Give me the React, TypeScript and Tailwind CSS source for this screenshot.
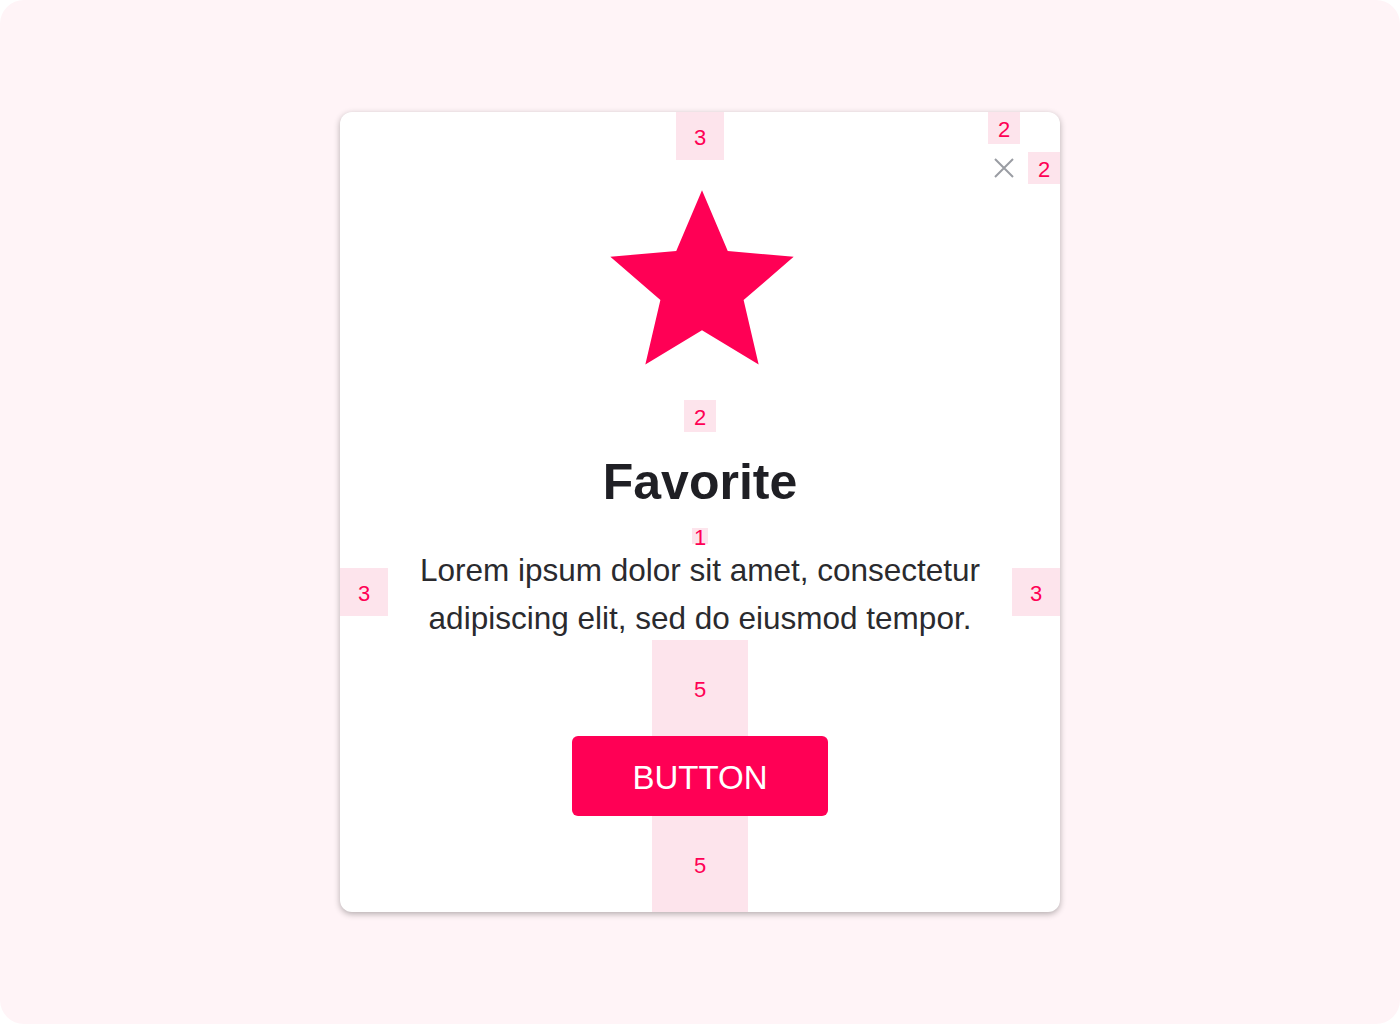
const Marker = ({ label, className }: { label: string; className: string }) => (
  <div
    className={`flex items-center justify-center pt-[4px] bg-[#fde4ec] text-[#ff0055] text-[22px] leading-none ${className}`}
  >
    {label}
  </div>
);

export default function App() {
  return (
    <div className="bg-white w-[1400px] h-[1024px]">
      <div
        className="w-full h-full rounded-[24px] bg-[#fff4f7] flex items-center justify-center"
        style={{ fontFamily: '"Liberation Sans", Arial, sans-serif' }}
      >
        <div className="relative w-[720px] h-[800px] bg-white rounded-[12px] shadow-[0_2px_6px_rgba(0,0,0,0.3)] flex flex-col items-center">
          {/* close button + its spacing markers */}
          <Marker label="2" className="absolute top-0 left-[648px] w-[32px] h-[32px]" />
          <Marker label="2" className="absolute top-[40px] right-0 w-[32px] h-[32px]" />
          <button className="absolute top-[32px] left-[640px] w-[48px] h-[48px] flex items-center justify-center">
            <svg width="20" height="20" viewBox="0 0 20 20" fill="none">
              <path d="M1 1L19 19M19 1L1 19" stroke="#9a9da3" strokeWidth="2" />
            </svg>
          </button>

          <Marker label="3" className="w-[48px] h-[48px] shrink-0" />

          <div className="h-[240px] w-full flex justify-center shrink-0">
            <svg className="mt-[12px] ml-[4px]" width="220" height="220" viewBox="0 0 24 24">
              <path
                d="M12 17.27L18.18 21l-1.64-7.03L22 9.24l-7.19-.61L12 2 9.19 8.63 2 9.24l5.46 4.73L5.82 21z"
                fill="#ff0055"
              />
            </svg>
          </div>

          <Marker label="2" className="w-[32px] h-[32px] shrink-0" />

          <h1 className="h-[96px] pt-[4px] leading-[92px] text-[50px] font-bold text-[#1f1f24] shrink-0">Favorite</h1>

          <Marker label="1" className="w-[16px] h-[16px] shrink-0 text-[20px] pt-[2px]" />

          <div className="flex items-center w-full h-[96px] shrink-0">
            <Marker label="3" className="w-[48px] h-[48px] shrink-0" />
            <p className="flex-1 pt-[3px] text-center text-[31.5px] leading-[48px] text-[#2a2a2e] font-light">
              Lorem ipsum dolor sit amet, consectetur adipiscing elit, sed do eiusmod tempor.
            </p>
            <Marker label="3" className="w-[48px] h-[48px] shrink-0" />
          </div>

          <Marker label="5" className="w-[96px] h-[96px] shrink-0" />

          <button className="w-[256px] h-[80px] pt-[4px] rounded-[6px] bg-[#ff0055] text-white text-[33px] shrink-0">
            BUTTON
          </button>

          <Marker label="5" className="w-[96px] h-[96px] shrink-0" />
        </div>
      </div>
    </div>
  );
}
